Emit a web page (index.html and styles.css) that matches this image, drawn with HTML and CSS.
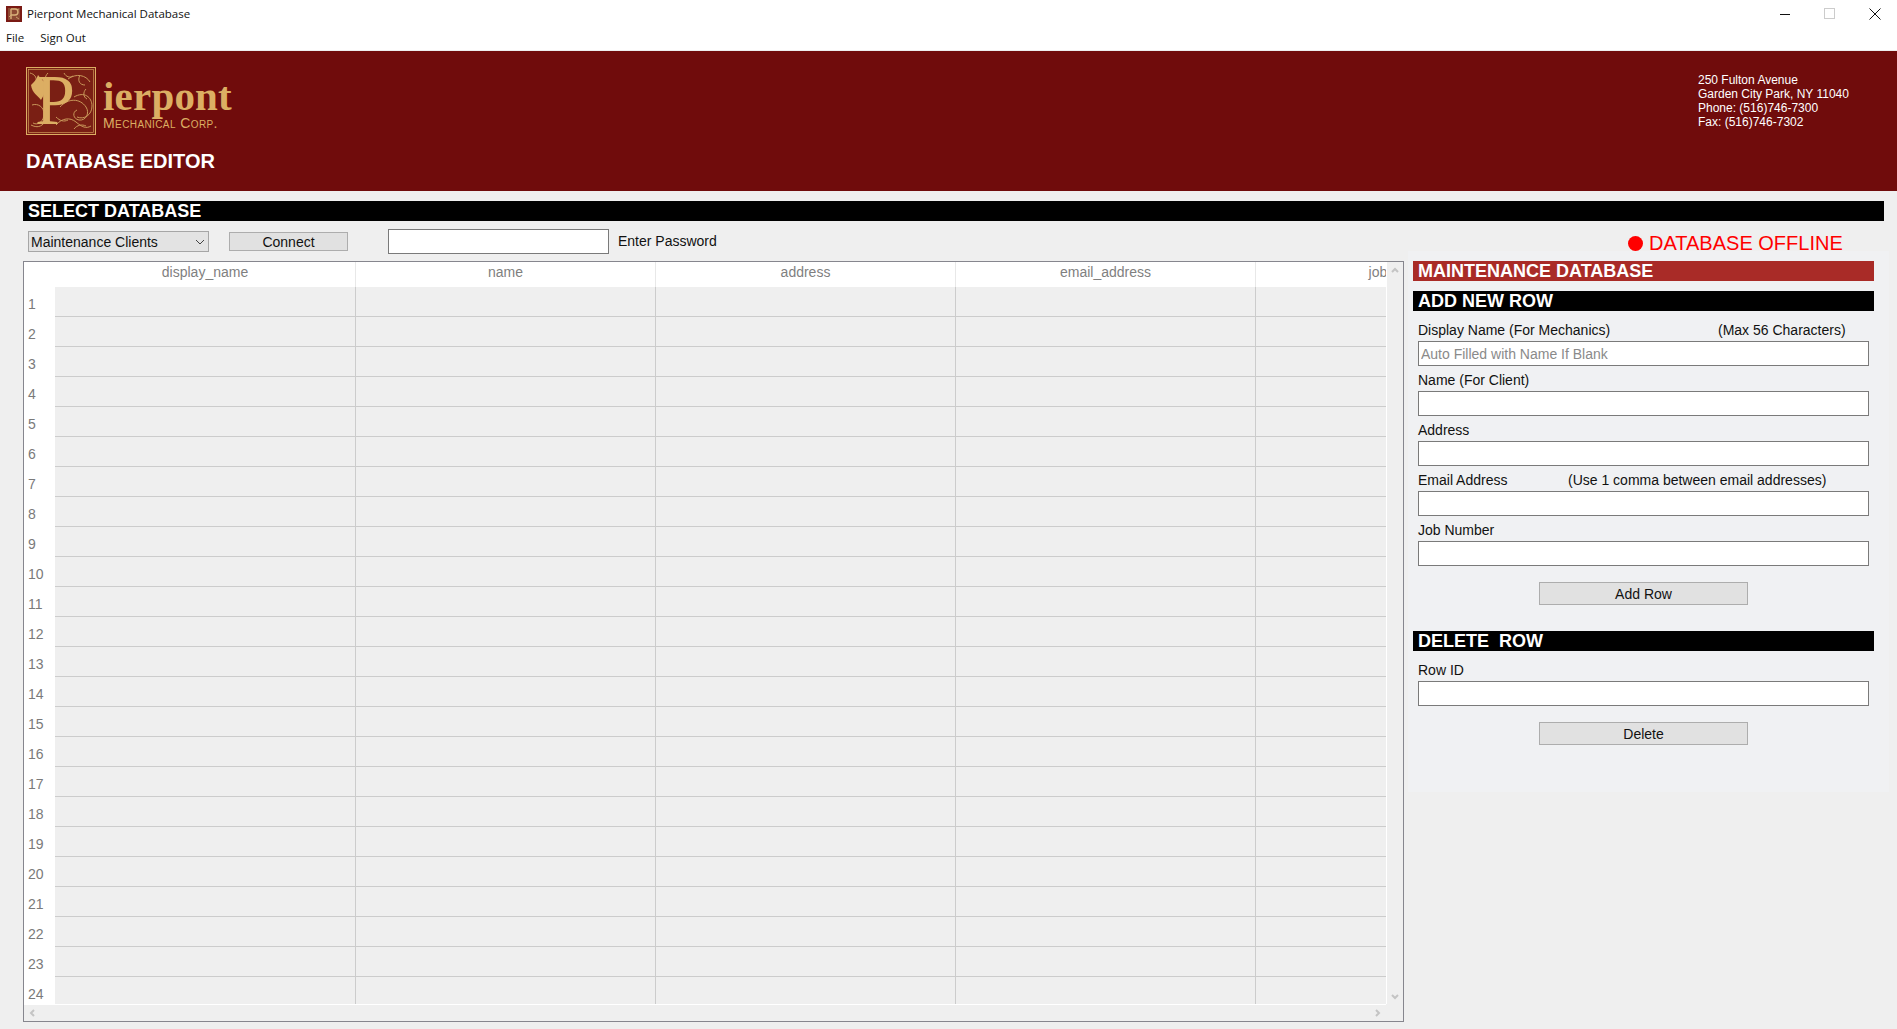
FILE: index.html
```html
<!DOCTYPE html>
<html lang="en">
<head>
<meta charset="utf-8">
<title>Pierpont Mechanical Database</title>
<link rel="stylesheet" href="styles.css">
</head>
<body>
<div class="app">
  <div class="titlebar">
    <svg class="app-icon" viewBox="0 0 16 16"><rect width="16" height="16" fill="#7a1a14"/><rect x="2" y="2" width="12" height="12" fill="#8d4a33"/><path d="M5 3v10M5 3h4a3 3 0 0 1 0 6H5" fill="none" stroke="#d9b27a" stroke-width="1.4"/><path d="M3 11l2-2M10 11l3 2M11 4l2-1" stroke="#d9b27a" stroke-width=".8"/></svg>
    <span class="app-title">Pierpont Mechanical Database</span>
    <div class="win-controls">
      <svg class="win-btn" viewBox="0 0 12 12"><path d="M1 6.5h10" stroke="#111" stroke-width="1"/></svg>
      <svg class="win-btn" viewBox="0 0 12 12"><rect x=".5" y=".5" width="10" height="10" fill="none" stroke="#ccc"/></svg>
      <svg class="win-btn" viewBox="0 0 12 12"><path d="M.5.5l11 11M11.5.5l-11 11" stroke="#111" stroke-width="1"/></svg>
    </div>
  </div>
  <div class="menubar"><span>File</span><span>Sign Out</span></div>
  <header class="banner">
    <div class="banner-left">
      <div class="logo">
        <svg class="logo-mark" viewBox="0 0 70 68">
          <rect x=".5" y=".5" width="69" height="67" fill="#7a1f14" stroke="#dcae63"/>
          <rect x="2.5" y="2.5" width="65" height="63" fill="none" stroke="#dcae63" stroke-width=".6"/>
          <g fill="none" stroke="#c9985a" stroke-width="1">
            <path d="M42 12c8-6 18-4 22 3M54 8c-3 6 0 10 5 10M48 30c10-6 18 0 18 9s-8 14-15 11M34 40c8-9 20-9 26 0 4 6 0 14-7 13-6-1-7-8-2-10"/>
            <path d="M6 38c6-2 12 2 12 9s-6 12-11 9M5 58c6 3 10 2 14-3M30 58c6-7 14-8 20-3s10 7 15 4M38 6c2 4 6 5 9 3M60 22c-3 3-3 8 1 10M4 6c4 1 7 4 6 8"/>
            <path d="M30 50c4 4 8 5 12 3M48 62c3-4 8-5 12-3M22 6c-4 4-3 8 0 10"/>
          </g>
          <path d="M5 18c3-3 6-6 7-10 2 3 6 5 7 10 1 6-1 10-4 15-3-4-9-7-10-15z" fill="#dcae63"/>
          <text class="logo-p" x="9" y="57">P</text>
        </svg>
        <div class="logo-words">
          <div class="logo-name">ierpont</div>
          <div class="logo-sub">Mechanical Corp.</div>
        </div>
      </div>
      <h1 class="banner-title">DATABASE EDITOR</h1>
    </div>
    <address class="contact">250 Fulton Avenue<br>Garden City Park, NY 11040<br>Phone: (516)746-7300<br>Fax: (516)746-7302</address>
  </header>
  <main class="main">
    <h2 class="bar bar-select">SELECT DATABASE</h2>
    <div class="toolbar">
      <div class="select-wrap">
        <select class="db-select"><option>Maintenance Clients</option></select>
        <svg class="select-chev" viewBox="0 0 10 6"><path d="M1 1l4 4 4-4" fill="none" stroke="#444" stroke-width="1"/></svg>
      </div>
      <button class="btn btn-connect">Connect</button>
      <input class="input input-pass" type="password">
      <span class="pass-label">Enter Password</span>
      <div class="status"><span class="status-dot"></span><span>DATABASE OFFLINE</span></div>
    </div>
    <div class="work">
      <section class="frame">
        <div class="grid-view">
          <div class="row head"><div class="rh"></div><div class="hc">display_name</div><div class="hc">name</div><div class="hc">address</div><div class="hc">email_address</div><div class="hc">job_number</div></div>
          <div class="row"><div class="rh">1</div><div class="c"></div><div class="c"></div><div class="c"></div><div class="c"></div><div class="c"></div></div>
          <div class="row"><div class="rh">2</div><div class="c"></div><div class="c"></div><div class="c"></div><div class="c"></div><div class="c"></div></div>
          <div class="row"><div class="rh">3</div><div class="c"></div><div class="c"></div><div class="c"></div><div class="c"></div><div class="c"></div></div>
          <div class="row"><div class="rh">4</div><div class="c"></div><div class="c"></div><div class="c"></div><div class="c"></div><div class="c"></div></div>
          <div class="row"><div class="rh">5</div><div class="c"></div><div class="c"></div><div class="c"></div><div class="c"></div><div class="c"></div></div>
          <div class="row"><div class="rh">6</div><div class="c"></div><div class="c"></div><div class="c"></div><div class="c"></div><div class="c"></div></div>
          <div class="row"><div class="rh">7</div><div class="c"></div><div class="c"></div><div class="c"></div><div class="c"></div><div class="c"></div></div>
          <div class="row"><div class="rh">8</div><div class="c"></div><div class="c"></div><div class="c"></div><div class="c"></div><div class="c"></div></div>
          <div class="row"><div class="rh">9</div><div class="c"></div><div class="c"></div><div class="c"></div><div class="c"></div><div class="c"></div></div>
          <div class="row"><div class="rh">10</div><div class="c"></div><div class="c"></div><div class="c"></div><div class="c"></div><div class="c"></div></div>
          <div class="row"><div class="rh">11</div><div class="c"></div><div class="c"></div><div class="c"></div><div class="c"></div><div class="c"></div></div>
          <div class="row"><div class="rh">12</div><div class="c"></div><div class="c"></div><div class="c"></div><div class="c"></div><div class="c"></div></div>
          <div class="row"><div class="rh">13</div><div class="c"></div><div class="c"></div><div class="c"></div><div class="c"></div><div class="c"></div></div>
          <div class="row"><div class="rh">14</div><div class="c"></div><div class="c"></div><div class="c"></div><div class="c"></div><div class="c"></div></div>
          <div class="row"><div class="rh">15</div><div class="c"></div><div class="c"></div><div class="c"></div><div class="c"></div><div class="c"></div></div>
          <div class="row"><div class="rh">16</div><div class="c"></div><div class="c"></div><div class="c"></div><div class="c"></div><div class="c"></div></div>
          <div class="row"><div class="rh">17</div><div class="c"></div><div class="c"></div><div class="c"></div><div class="c"></div><div class="c"></div></div>
          <div class="row"><div class="rh">18</div><div class="c"></div><div class="c"></div><div class="c"></div><div class="c"></div><div class="c"></div></div>
          <div class="row"><div class="rh">19</div><div class="c"></div><div class="c"></div><div class="c"></div><div class="c"></div><div class="c"></div></div>
          <div class="row"><div class="rh">20</div><div class="c"></div><div class="c"></div><div class="c"></div><div class="c"></div><div class="c"></div></div>
          <div class="row"><div class="rh">21</div><div class="c"></div><div class="c"></div><div class="c"></div><div class="c"></div><div class="c"></div></div>
          <div class="row"><div class="rh">22</div><div class="c"></div><div class="c"></div><div class="c"></div><div class="c"></div><div class="c"></div></div>
          <div class="row"><div class="rh">23</div><div class="c"></div><div class="c"></div><div class="c"></div><div class="c"></div><div class="c"></div></div>
          <div class="row"><div class="rh">24</div><div class="c"></div><div class="c"></div><div class="c"></div><div class="c"></div><div class="c"></div></div>
        </div>
        <div class="vbar">
          <svg class="chev" viewBox="0 0 8 6"><path d="M1 5l3-3 3 3" fill="none" stroke="#c4c4c4" stroke-width="2"/></svg>
          <svg class="chev" viewBox="0 0 8 6"><path d="M1 1l3 3 3-3" fill="none" stroke="#c4c4c4" stroke-width="2"/></svg>
        </div>
        <div class="hbar">
          <svg class="chev-h" viewBox="0 0 6 8"><path d="M5 1L2 4l3 3" fill="none" stroke="#c4c4c4" stroke-width="2"/></svg>
          <svg class="chev-h" viewBox="0 0 6 8"><path d="M1 1l3 3-3 3" fill="none" stroke="#c4c4c4" stroke-width="2"/></svg>
        </div>
        <div class="corner"></div>
      </section>
      <aside class="panel">
        <h2 class="bar bar-red">MAINTENANCE DATABASE</h2>
        <h2 class="bar bar-add">ADD NEW ROW</h2>
        <div class="form">
          <div class="field first">
            <div class="lbl"><span>Display Name (For Mechanics)</span><span class="hint-max">(Max 56 Characters)</span></div>
            <input class="input" placeholder="Auto Filled with Name If Blank">
          </div>
          <div class="field">
            <div class="lbl"><span>Name (For Client)</span></div>
            <input class="input">
          </div>
          <div class="field">
            <div class="lbl"><span>Address</span></div>
            <input class="input">
          </div>
          <div class="field">
            <div class="lbl"><span>Email Address</span><span class="hint-mail">(Use 1 comma between email addresses)</span></div>
            <input class="input">
          </div>
          <div class="field">
            <div class="lbl"><span>Job Number</span></div>
            <input class="input">
          </div>
          <button class="btn btn-wide btn-add">Add Row</button>
        </div>
        <h2 class="bar bar-del">DELETE&nbsp; ROW</h2>
        <div class="form">
          <div class="field field-id">
            <div class="lbl"><span>Row ID</span></div>
            <input class="input">
          </div>
          <button class="btn btn-wide btn-del">Delete</button>
        </div>
      </aside>
    </div>
  </main>
</div>
</body>
</html>
```
FILE: styles.css
```css
* { box-sizing: border-box; }
html, body { margin: 0; padding: 0; height: 100%; overflow: hidden; }
body { font-family: "Liberation Sans", Arial, sans-serif; background: #efefef; color: #111; }
.app { display: flex; flex-direction: column; height: 1029px; }

.titlebar { height: 27px; background: #fff; display: flex; align-items: center; padding-left: 6px; flex: none; }
.app-icon { width: 16px; height: 16px; margin-right: 5px; }
.app-title { font-family: "Open Sans", sans-serif; font-size: 11.5px; color: #111; }
.win-controls { margin-left: auto; display: flex; gap: 33px; padding-right: 16px; align-items: center; }
.win-btn { width: 12px; height: 12px; display: block; }
.menubar { height: 24px; background: #fff; display: flex; gap: 16px; padding: 0 0 3px 6px; align-items: center; font-family: "Open Sans", sans-serif; font-size: 11.5px; flex: none; border-bottom: 1px solid #eee; }

.banner { height: 140px; background: #700c0c; display: flex; justify-content: space-between; flex: none; color: #fff; }
.banner-left { padding: 16px 0 0 26px; }
.logo { display: flex; gap: 7px; color: #dcae63; }
.logo-mark { width: 70px; height: 68px; display: block; }
.logo-p { font-family: "Liberation Serif", serif; font-size: 72px; fill: #dcae63; }
.logo-words { padding-top: 7px; }
.logo-name { font-family: "Liberation Serif", serif; font-weight: 700; font-size: 41px; line-height: 44px; letter-spacing: .2px; }
.logo-sub { font-family: "Liberation Sans", sans-serif; font-variant: small-caps; font-size: 14px; line-height: 14px; margin-top: -2px; letter-spacing: .4px; }
.banner-title { margin: 14px 0 0; font-size: 20px; line-height: 24px; font-weight: 700; color: #fff; }
.contact { font-style: normal; font-size: 12px; line-height: 14px; padding: 22px 0 0; width: 199px; color: #fff; }

.main { flex: 1; padding-top: 10px; min-height: 0; }
.bar { margin: 0; height: 20px; font-size: 18px; line-height: 20px; font-weight: 700; color: #fff; background: #000; padding-left: 5px; }
.bar-select { margin: 0 13px 0 23px; }
.bar-red { background: #a92b27; }
.bar-add { margin-top: 10px; }
.bar-del { margin-top: 26px; }

.toolbar { height: 40px; display: flex; align-items: center; padding-left: 28px; font-size: 14px; position: relative; }
.select-wrap { position: relative; width: 181px; height: 21px; margin-right: 20px; margin-top: 1px; }
.db-select { appearance: none; width: 100%; height: 100%; border: 1px solid #a6a6a6; border-radius: 0; background: #e3e3e3; font: 14px "Liberation Sans", sans-serif; color: #111; padding: 0 2px; }
.select-chev { position: absolute; right: 4px; top: 8px; width: 10px; height: 6px; }
.btn { display: block; background: #e1e1e1; border: 1px solid #adadad; font: 14px "Liberation Sans", sans-serif; color: #111; padding: 0; border-radius: 0; }
.btn-connect { width: 119px; height: 19px; margin-top: 1px; margin-right: 40px; }
.input { display: block; width: 100%; height: 25px; background: #fff; border: 1px solid #7a7a7a; border-radius: 0; font: 14px "Liberation Sans", sans-serif; padding: 0 2px; outline: none; }
.input::placeholder { color: #8a8a8a; opacity: 1; }
.input-pass { width: 221px; margin-right: 9px; }
.pass-label { color: #111; }
.status { position: absolute; left: 1628px; top: 10px; display: flex; align-items: center; gap: 6px; color: #f00; font-size: 20px; line-height: 24px; white-space: nowrap; }
.status-dot { width: 15px; height: 15px; border-radius: 50%; background: #f00; }

.work { display: flex; align-items: flex-start; padding-left: 23px; }
.frame { width: 1381px; height: 761px; border: 1px solid #86868e; display: grid; grid-template-columns: 1362px 1px 16px; grid-template-rows: 742px 1px 16px; background: #fff; }
.grid-view { grid-column: 1; grid-row: 1; overflow: hidden; background: #fff; }
.row { display: grid; grid-template-columns: 31px 301px repeat(4, 300px); height: 30px; width: 1532px; }
.row.head { height: 25px; }
.rh { font-size: 14px; color: #7a7a7a; padding: 9px 0 0 4px; line-height: 16px; background: #fff; }
.hc { font-size: 14px; color: #7f7f7f; text-align: center; line-height: 21px; border-right: 1px solid #e8e8e8; background: #fff; }
.c { background: #efefef; border-right: 1px solid #ccc; border-bottom: 1px solid #ccc; }
.vbar { grid-column: 2 / 4; grid-row: 1; background: #efefef; border-left: 1px solid #fff; display: flex; flex-direction: column; justify-content: space-between; align-items: center; padding: 5px 0 4px; }
.hbar { grid-column: 1 / 2; grid-row: 2 / 4; background: #efefef; border-top: 1px solid #fff; display: flex; justify-content: space-between; align-items: center; padding: 0 5px 0 5px; }
.corner { grid-column: 2 / 4; grid-row: 2 / 4; background: #efefef; }
.chev { width: 8px; height: 6px; display: block; margin-left: -1px; }
.chev-h { width: 6px; height: 8px; display: block; }

.panel { width: 481px; height: 541px; margin: -10px 0 0 4px; background: #f0f1f3; padding: 10px 15px 0 5px; }
.form { padding: 0 5px; }
.field { height: 50px; display: flex; flex-direction: column; justify-content: flex-end; padding-bottom: 0; }
.field.first { height: 55px; }
.field-id { height: 55px; }
.lbl { font-size: 14px; line-height: 16px; margin-bottom: 3px; color: #111; position: relative; display: flex; }
.hint-max { position: absolute; left: 300px; }
.hint-mail { position: absolute; left: 150px; }
.btn-wide { width: 209px; height: 23px; margin: 0 auto; }
.btn-add { margin-top: 16px; }
.btn-del { margin-top: 16px; }
```
